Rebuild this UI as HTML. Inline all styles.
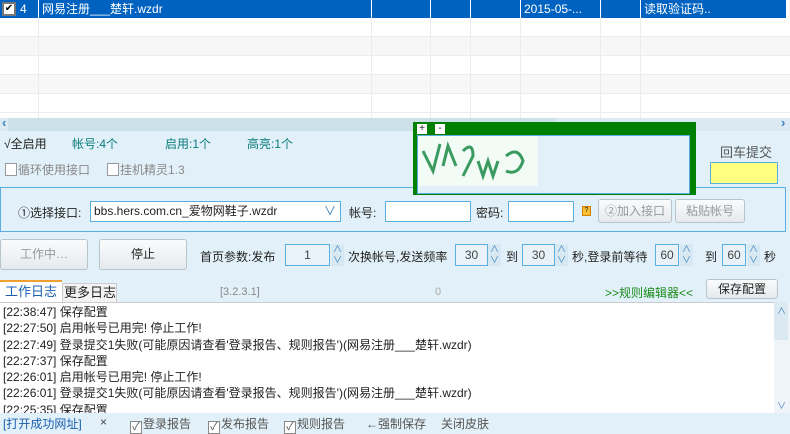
<!DOCTYPE html>
<html><head><meta charset="utf-8"><style>
*{box-sizing:border-box;margin:0;padding:0}
body{width:790px;height:432px;overflow:hidden;background:#e2f1f9;font-family:"Liberation Sans","Noto Sans CJK SC",sans-serif;font-size:12px;color:#222;position:relative}
.a{position:absolute;white-space:nowrap}
.vl{position:absolute;top:0;width:1px;height:118px;background:#ececec}
.row{position:absolute;left:0;width:790px;height:19px;border-bottom:1px solid #ececec}
.btn{position:absolute;border:1px solid #b8c4cc;border-radius:3px;background:linear-gradient(#fafbfc,#e6eaee);text-align:center;color:#222;white-space:nowrap;overflow:hidden}
.inp{position:absolute;background:#fff;border:1px solid #5aaee0;white-space:nowrap;overflow:hidden}
.num{position:absolute;background:#e8f2f8;border:1px solid #5aaee0;text-align:center;color:#444;height:22px;line-height:20px}
.spin{position:absolute;width:13px;height:22px;background:#d6e8f2;color:#3a80c0;font-size:9px;line-height:11px;text-align:center}
.cb{display:inline-block;width:12px;height:13px;border:1px solid #888;background:#fff;vertical-align:-2px;font-size:11px;line-height:11px;text-align:center;margin-right:1px}
.log div{height:16.3px;line-height:16px}
.wl{position:absolute;top:0;width:1px;height:18px;background:#fff}
</style></head><body>
<!-- table -->
<div class="a" style="left:0;top:0;width:790px;height:118px;background:#fff"></div>
<div class="row" style="top:18px;background:#fff"></div>
<div class="row" style="top:37px;background:#f7f7f7"></div>
<div class="row" style="top:56px;background:#fff"></div>
<div class="row" style="top:75px;background:#f7f7f7"></div>
<div class="row" style="top:94px;background:#fff"></div>
<div class="vl" style="left:38px"></div><div class="vl" style="left:371px"></div><div class="vl" style="left:430px"></div><div class="vl" style="left:470px"></div><div class="vl" style="left:520px"></div><div class="vl" style="left:600px"></div><div class="vl" style="left:640px"></div>
<div class="a" style="left:0;top:0;width:786px;height:18px;background:#0062c0;color:#fff;line-height:18px">
 <span class="a" style="left:2px;top:2px;width:14px;height:14px;background:#fff;border:2px solid #777;color:#000;font-size:10px;line-height:10px;text-align:center">✔</span>
 <span class="a" style="left:20px">4</span><span class="a" style="left:42px">网易注册___楚轩.wzdr</span>
 <span class="a" style="left:524px">2015-05-...</span><span class="a" style="left:644px">读取验证码..</span>
 <span class="wl" style="left:38px"></span><span class="wl" style="left:371px"></span><span class="wl" style="left:430px"></span><span class="wl" style="left:470px"></span><span class="wl" style="left:520px"></span><span class="wl" style="left:600px"></span><span class="wl" style="left:640px"></span>
</div>
<!-- scrollbar -->
<div class="a" style="left:0;top:118px;width:790px;height:13px;background:#dbeaf2"></div>
<div class="a" style="left:8px;top:118px;width:548px;height:13px;background:#cce0ea"></div>
<div class="a" style="left:2px;top:115px;color:#3a80c0;font-size:13px;font-weight:bold">‹</div>
<div class="a" style="left:781px;top:115px;color:#3a80c0;font-size:13px;font-weight:bold">›</div>
<!-- stats -->
<div class="a" style="left:4px;top:135px">√全启用</div>
<div class="a" style="left:72px;top:135px;color:#0a7b7b">帐号:4个</div>
<div class="a" style="left:165px;top:135px;color:#0a7b7b">启用:1个</div>
<div class="a" style="left:247px;top:135px;color:#0a7b7b">高亮:1个</div>
<div class="a" style="left:5px;top:161px;color:#888"><span class="cb" style="border-color:#999"></span>循环使用接口</div>
<div class="a" style="left:107px;top:161px;color:#888"><span class="cb" style="border-color:#999"></span>挂机精灵1.3</div>
<!-- group -->
<div class="a" style="left:0;top:187px;width:786px;height:45px;border:1px solid #5aaee0;background:#e2f1f9"></div>
<div class="a" style="left:18px;top:204px">①选择接口:</div>
<div class="inp" style="left:90px;top:201px;width:251px;height:21px;padding-left:3px;line-height:19px">bbs.hers.com.cn_爱物网鞋子.wzdr<span style="position:absolute;right:4px;top:0;color:#3a80c0">∨</span></div>
<div class="a" style="left:349px;top:204px">帐号:</div>
<div class="inp" style="left:385px;top:201px;width:86px;height:21px"></div>
<div class="a" style="left:476px;top:204px">密码:</div>
<div class="inp" style="left:508px;top:201px;width:66px;height:21px"></div>
<div class="a" style="left:582px;top:206px;width:9px;height:10px;background:#f8c030;border:1px solid #d08000;font-size:7px;line-height:8px;text-align:center">?</div>
<div class="btn" style="left:598px;top:199px;width:74px;height:24px;line-height:22px;color:#999">②加入接口</div>
<div class="btn" style="left:675px;top:199px;width:70px;height:24px;line-height:22px;color:#999">粘贴帐号</div>
<!-- buttons row -->
<div class="btn" style="left:0;top:239px;width:88px;height:31px;line-height:29px;color:#999">工作中…</div>
<div class="btn" style="left:99px;top:239px;width:88px;height:31px;line-height:29px">停止</div>
<div class="a" style="left:200px;top:248px">首页参数:发布</div>
<div class="num" style="left:285px;top:244px;width:45px">1</div><div class="spin" style="left:331px;top:244px">∧<br>∨</div>
<div class="a" style="left:348px;top:248px">次换帐号,发送频率</div>
<div class="num" style="left:455px;top:244px;width:33px">30</div><div class="spin" style="left:488px;top:244px">∧<br>∨</div>
<div class="a" style="left:506px;top:248px">到</div>
<div class="num" style="left:522px;top:244px;width:33px">30</div><div class="spin" style="left:555px;top:244px">∧<br>∨</div>
<div class="a" style="left:572px;top:248px">秒,登录前等待</div>
<div class="num" style="left:655px;top:244px;width:24px">60</div><div class="spin" style="left:680px;top:244px">∧<br>∨</div>
<div class="a" style="left:705px;top:248px">到</div>
<div class="num" style="left:722px;top:244px;width:24px">60</div><div class="spin" style="left:747px;top:244px">∧<br>∨</div>
<div class="a" style="left:764px;top:248px">秒</div>
<!-- tabs -->
<div class="a" style="left:0;top:280px;width:62px;height:22px;background:#fff;border-top:2px solid #f0a030;color:#1a5fb0;padding-left:5px;line-height:20px;font-size:13px">工作日志</div>
<div class="a" style="left:62px;top:283px;width:55px;height:19px;background:#f2f2f2;border:1px solid #ccc;border-bottom:none;line-height:18px;padding-left:1px;font-size:13px">更多日志</div>
<div class="a" style="left:220px;top:286px;color:#888;font-size:11px">[3.2.3.1]</div>
<div class="a" style="left:435px;top:286px;color:#aaa;font-size:11px">0</div>
<div class="a" style="left:605px;top:284px;color:#1a8a1a">&gt;&gt;规则编辑器&lt;&lt;</div>
<div class="btn" style="left:706px;top:279px;width:72px;height:20px;line-height:18px">保存配置</div>
<!-- log -->
<div class="a" style="left:0;top:302px;width:790px;height:111px;background:#fff;border-top:1px solid #ccc"></div>
<div class="a" style="left:774px;top:302px;width:16px;height:111px;background:#eef4f8"></div>
<div class="a" style="left:774px;top:302px;width:14px;height:38px;background:#dbe9f3"></div>
<div class="a" style="left:777px;top:304px;color:#3a80c0;font-size:9px">∧</div>
<div class="a" style="left:777px;top:399px;color:#3a80c0;font-size:9px">∨</div>
<div class="a log" style="left:3px;top:304px;width:770px;height:109px;overflow:hidden">
<div>[22:38:47] 保存配置</div>
<div>[22:27:50] 启用帐号已用完! 停止工作!</div>
<div>[22:27:49] 登录提交1失败(可能原因请查看'登录报告、规则报告')(网易注册___楚轩.wzdr)</div>
<div>[22:27:37] 保存配置</div>
<div>[22:26:01] 启用帐号已用完! 停止工作!</div>
<div>[22:26:01] 登录提交1失败(可能原因请查看'登录报告、规则报告')(网易注册___楚轩.wzdr)</div>
<div>[22:25:35] 保存配置</div>
</div>
<!-- bottom -->
<div class="a" style="left:3px;top:415px;color:#1a5fb0">[打开成功网址]</div>
<div class="a" style="left:100px;top:415px;color:#444">×</div>
<div class="a" style="left:130px;top:415px;color:#555"><span class="cb">✓</span>登录报告</div>
<div class="a" style="left:208px;top:415px;color:#555"><span class="cb">✓</span>发布报告</div>
<div class="a" style="left:284px;top:415px;color:#555"><span class="cb">✓</span>规则报告</div>
<div class="a" style="left:366px;top:415px;color:#555">←强制保存</div>
<div class="a" style="left:441px;top:415px;color:#555">关闭皮肤</div>
<!-- captcha -->
<div class="a" style="left:413px;top:122px;width:283px;height:73px;background:#008000"></div>
<div class="a" style="left:417px;top:124px;width:10px;height:10px;background:#fff;font-size:10px;line-height:9px;text-align:center">+</div>
<div class="a" style="left:435px;top:124px;width:10px;height:10px;background:#fff;font-size:10px;line-height:9px;text-align:center">-</div>
<div class="a" style="left:417px;top:135px;width:273px;height:59px;background:#e2f1f9;border:1px solid #5aaee0"></div>
<svg class="a" style="left:418px;top:136px" width="120" height="50"><rect width="120" height="50" fill="#f2fbf5"/><g fill="none" stroke="#3a9a60" stroke-width="3"><path d="M5 15 L15 35 L22 8"/><path d="M25 30 L30 10 L38 30"/><path d="M45 15 Q55 5 55 20 Q50 30 45 40"/><path d="M60 25 L65 40 L70 25 L75 40 L80 25"/><path d="M88 20 Q100 10 105 25 Q100 40 88 35"/></g></svg>
<div class="a" style="left:720px;top:142px;color:#555;font-size:13px">回车提交</div>
<div class="a" style="left:710px;top:162px;width:68px;height:22px;background:#ffff80;border:1px solid #5aaee0"></div>
</body></html>
